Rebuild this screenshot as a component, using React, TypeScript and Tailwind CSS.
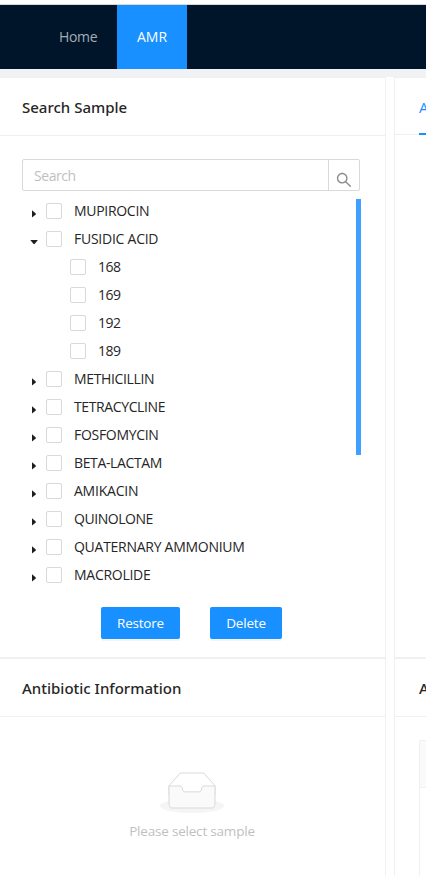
import type { ReactNode } from "react";

type Item = { name: string; tracking: string; child?: boolean; open?: boolean };

const items: Item[] = [
  { name: "MUPIROCIN", tracking: "tracking-[-0.3px]" },
  { name: "FUSIDIC ACID", tracking: "tracking-[-0.25px]", open: true },
  { name: "168", tracking: "tracking-[-0.5px]", child: true },
  { name: "169", tracking: "tracking-[-0.5px]", child: true },
  { name: "192", tracking: "tracking-[-0.5px]", child: true },
  { name: "189", tracking: "tracking-[-0.5px]", child: true },
  { name: "METHICILLIN", tracking: "tracking-[-0.35px]" },
  { name: "TETRACYCLINE", tracking: "tracking-[-0.38px]" },
  { name: "FOSFOMYCIN", tracking: "tracking-[-0.3px]" },
  { name: "BETA-LACTAM", tracking: "tracking-[-0.36px]" },
  { name: "AMIKACIN", tracking: "tracking-[-0.23px]" },
  { name: "QUINOLONE", tracking: "tracking-[-0.46px]" },
  { name: "QUATERNARY AMMONIUM", tracking: "tracking-[-0.27px]" },
  { name: "MACROLIDE", tracking: "tracking-[-0.28px]" },
];

function Caret({ open }: { open?: boolean }) {
  return (
    <svg className="mt-1.5 h-3 w-6 shrink-0" viewBox="0 0 24 12" fill="#1f1f1f">
      {open ? <path d="M8.3 4h7.6L12.6 8h-1z" /> : <path d="M10 2.2v7.4L13.8 6.4v-1z" />}
    </svg>
  );
}

function TreeRow({ item }: { item: Item }) {
  return (
    <div className={`flex h-7 items-center ${item.child ? "pl-12" : ""}`}>
      {!item.child && <Caret open={item.open} />}
      <span className="h-4 w-4 shrink-0 rounded-xs border border-[#d9d9d9] bg-white" />
      <span className={`ml-3 whitespace-nowrap text-[14px] leading-7 ${item.tracking}`}>{item.name}</span>
    </div>
  );
}

function CardTitle({ children }: { children: ReactNode }) {
  return (
    <div className="h-[58px] border-b border-[#f0f0f0] pl-[22px] font-['Noto_Sans','Open_Sans',sans-serif] text-[15px] leading-[59px] font-medium whitespace-nowrap text-[#262626]">
      {children}
    </div>
  );
}

export default function App() {
  return (
    <div className="h-[876px] w-[426px] overflow-hidden bg-white font-['Open_Sans','Noto_Sans',sans-serif] text-[14px] text-[#262626]">
      <header className="mt-1 flex h-[65px] border-t border-[#d9d9d9] bg-[#001529] leading-16">
        <span className="ml-[39px] w-[78px] pl-5 tracking-[-0.35px] text-[#a6adb4]">Home</span>
        <span className="w-[70px] bg-[#1890ff] text-center text-white">AMR</span>
      </header>
      <div className="h-2 bg-[#f0f2f5]" />
      <main className="flex h-[799px]">
        <div className="w-[386px] shrink-0">
          <section className="h-[581px] border-y border-r border-[#f0f0f0]">
            <CardTitle>Search Sample</CardTitle>
            <div className="mt-[23px] ml-[22px] flex h-8 w-[338px] rounded-xs border border-[#d9d9d9]">
              <span className="flex-1 pl-[11px] leading-[31px] tracking-[-0.45px] text-[#bfbfbf]">Search</span>
              <span className="w-[31px] border-l border-[#d9d9d9] pt-3 pl-[7px]">
                <svg className="h-4 w-4" viewBox="64 64 896 896" fill="#8c8c8c">
                  <path d="M909.6 854.5L649.9 594.8C690.2 542.7 712 479 712 412c0-80.2-31.3-155.4-87.9-212.1-56.6-56.7-132-87.9-212.1-87.9s-155.5 31.3-212.1 87.9C143.2 256.5 112 331.8 112 412c0 80.1 31.3 155.5 87.9 212.1C256.5 680.8 331.8 712 412 712c67 0 130.6-21.8 182.7-62l259.7 259.6a8.2 8.2 0 0011.6 0l43.6-43.5a8.2 8.2 0 000-11.6zM570.4 570.4C528 612.7 471.8 636 412 636s-116-23.3-158.4-65.6C211.3 528 188 471.8 188 412s23.3-116.1 65.6-158.4C296 211.3 352.2 188 412 188s116.1 23.2 158.4 65.6S636 352.2 636 412s-23.3 116.1-65.6 158.4z" />
                </svg>
              </span>
            </div>
            <div className="mt-1.5 ml-[22px] flex h-[392px] w-[339px] justify-between">
              <div>
                {items.map((item) => (
                  <TreeRow key={item.name} item={item} />
                ))}
              </div>
              <div className="mt-0.5 h-64 w-[5px] bg-[#40a0ff]" />
            </div>
            <div className="mt-[18px] ml-[101px] flex gap-[30px] text-[13.5px] leading-8 tracking-[-0.2px] text-white">
              <span className="h-8 w-[79px] rounded-xs bg-[#1890ff] text-center shadow-[0_2px_0_rgba(0,0,0,0.04)]">Restore</span>
              <span className="h-8 w-[72px] rounded-xs bg-[#1890ff] text-center shadow-[0_2px_0_rgba(0,0,0,0.04)]">Delete</span>
            </div>
          </section>
          <section className="h-[218px] border-t border-r border-[#f0f0f0]">
            <CardTitle>Antibiotic Information</CardTitle>
            <div className="flex flex-col items-center pt-[55px] pr-px text-[#bfbfbf]">
              <svg className="h-[41px] w-16" viewBox="0 0 64 41">
                <g transform="translate(0 1)" fill="none">
                  <ellipse fill="#f5f5f5" cx="32" cy="33" rx="32" ry="7" />
                  <g stroke="#d9d9d9">
                    <path d="M55 12.76L44.854 1.258C44.367.474 43.656 0 42.907 0H21.093c-.749 0-1.46.474-1.947 1.257L9 12.761V22h46v-9.24z" />
                    <path fill="#fafafa" d="M41.613 15.931c0-1.605.994-2.93 2.227-2.931H55v18.137C55 33.26 53.68 35 52.05 35h-40.1C10.32 35 9 33.259 9 31.137V13h11.16c1.233 0 2.227 1.323 2.227 2.928v.022c0 1.605 1.005 2.901 2.237 2.901h14.752c1.232 0 2.237-1.308 2.237-2.913v-.007z" />
                  </g>
                </g>
              </svg>
              <span className="mt-[7px] text-[13.5px] leading-[22px] tracking-[-0.2px]">Please select sample</span>
            </div>
          </section>
        </div>
        <div className="ml-2 w-8 shrink-0">
          <section className="h-[581px] border-y border-l border-[#f0f0f0]">
            <div className="h-[57px] border-b border-[#f0f0f0] pl-6">
              <div className="h-[57px] w-2 border-b-2 border-[#1890ff] text-[15px] leading-[58px] text-[#1890ff]">A</div>
            </div>
          </section>
          <section className="h-[218px] border-t border-l border-[#f0f0f0]">
            <div className="h-[58px] border-b border-[#f0f0f0] pl-6 font-['Noto_Sans','Open_Sans',sans-serif] text-[15px] leading-[59px] font-medium">A</div>
            <div className="mt-[23px] ml-6 h-[140px] rounded-tl-xs border-t border-l border-[#f0f0f0]">
              <div className="h-[47px] border-b border-[#f0f0f0] bg-[#fafafa]" />
            </div>
          </section>
        </div>
      </main>
    </div>
  );
}
